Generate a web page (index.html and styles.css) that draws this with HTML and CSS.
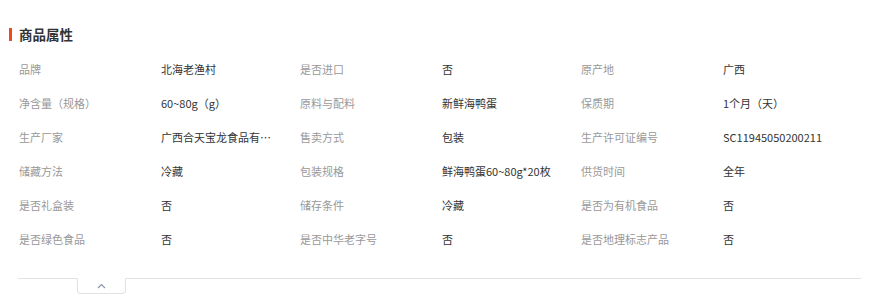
FILE: index.html
```html
<!DOCTYPE html>
<html lang="zh">
<head>
<meta charset="utf-8">
<link rel="stylesheet" href="styles.css">
</head>
<body>
<div class="panel">
  <h2 class="title">商品属性</h2>
  <div class="attrs">
    <span class="k">品牌</span><span class="v">北海老渔村</span>
    <span class="k">是否进口</span><span class="v">否</span>
    <span class="k">原产地</span><span class="v">广西</span>
    <span class="k">净含量（规格）</span><span class="v">60~80g（g）</span>
    <span class="k">原料与配料</span><span class="v">新鲜海鸭蛋</span>
    <span class="k">保质期</span><span class="v">1个月（天）</span>
    <span class="k">生产厂家</span><span class="v">广西合天宝龙食品有限公司</span>
    <span class="k">售卖方式</span><span class="v">包装</span>
    <span class="k">生产许可证编号</span><span class="v">SC11945050200211</span>
    <span class="k">储藏方法</span><span class="v">冷藏</span>
    <span class="k">包装规格</span><span class="v">鲜海鸭蛋60~80g*20枚</span>
    <span class="k">供货时间</span><span class="v">全年</span>
    <span class="k">是否礼盒装</span><span class="v">否</span>
    <span class="k">储存条件</span><span class="v">冷藏</span>
    <span class="k">是否为有机食品</span><span class="v">否</span>
    <span class="k">是否绿色食品</span><span class="v">否</span>
    <span class="k">是否中华老字号</span><span class="v">否</span>
    <span class="k">是否地理标志产品</span><span class="v">否</span>
  </div>
  <div class="foot">
    <button class="fold" type="button" aria-label="收起">
      <svg width="9" height="6" viewBox="0 0 9 6"><path d="M1 5 L4.5 1.5 L8 5" fill="none" stroke="#8a96a8" stroke-width="1.2"/></svg>
    </button>
  </div>
</div>
</body>
</html>
```
FILE: styles.css
```css
* { box-sizing: border-box; }
html, body { margin: 0; padding: 0; background: #fff; }
body {
  font-family: "Noto Sans CJK SC", "Microsoft YaHei", sans-serif;
  color: #333;
}
.panel {
  width: 879px;
  height: 300px;
  padding: 24px 18px 0 9px;
}
.title {
  margin: 0;
  display: flex;
  align-items: center;
  gap: 7px;
  font-size: 13.5px;
  font-weight: bold;
  line-height: 20px;
  color: #333;
}
.title::before {
  content: "";
  width: 3px;
  height: 13px;
  background: #f04a1a;
}
.attrs {
  margin-top: 16px;
  padding-left: 10px;
  display: grid;
  grid-template-columns: 142px 139px 142px 139px 142px 1fr;
  grid-auto-rows: 34px;
}
.k, .v {
  font-size: 11px;
  line-height: 18px;
  white-space: nowrap;
  overflow: hidden;
  text-overflow: ellipsis;
}
.k { color: #999; }
.v { color: #333; padding-right: 26px; }
.foot {
  margin-top: 14px;
  margin-left: 9px;
  border-top: 1px solid #e2e2e2;
  height: 16px;
  position: relative;
}
.fold {
  position: absolute;
  left: 59px;
  top: -1px;
  width: 49px;
  height: 16px;
  border: 1px solid #e2e2e2;
  border-top: 1px solid #fff;
  border-radius: 0 0 4px 4px;
  background: #fff;
  padding: 0;
  display: flex;
  align-items: center;
  justify-content: center;
}
```
